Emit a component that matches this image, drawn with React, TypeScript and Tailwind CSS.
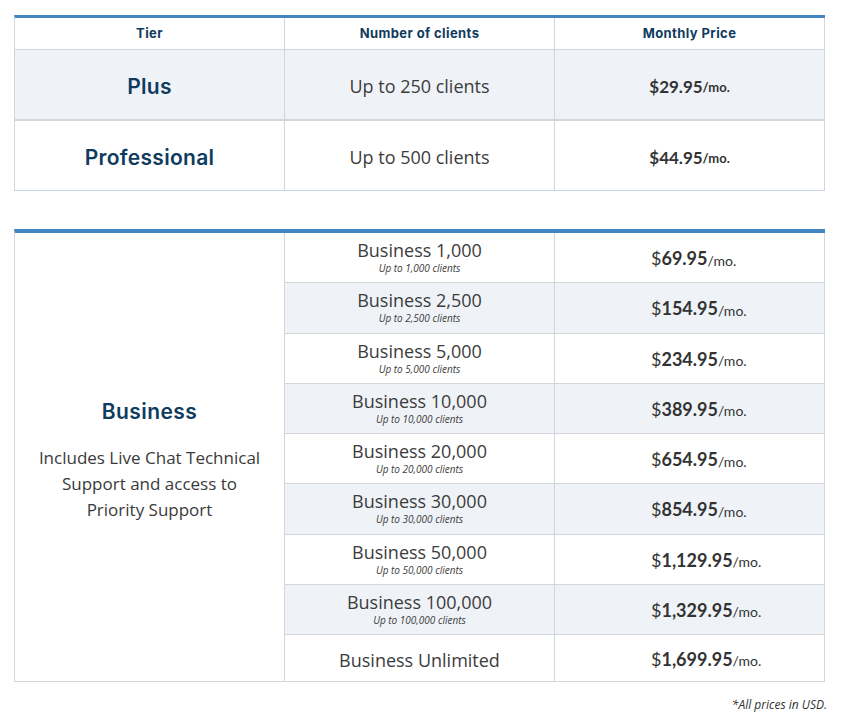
import React from 'react';

const heading = "font-['Inter','Noto_Sans',sans-serif]";
const body = "font-['Open_Sans','Noto_Sans',sans-serif]";
const price = "font-['Lato','Liberation_Sans',sans-serif]";

const topTiers = [
  { name: 'Plus', clients: 'Up to 250 clients', price: '$29.95' },
  { name: 'Professional', clients: 'Up to 500 clients', price: '$44.95' },
];

const businessTiers = [
  { name: 'Business 1,000', sub: 'Up to 1,000 clients', price: '69.95' },
  { name: 'Business 2,500', sub: 'Up to 2,500 clients', price: '154.95' },
  { name: 'Business 5,000', sub: 'Up to 5,000 clients', price: '234.95' },
  { name: 'Business 10,000', sub: 'Up to 10,000 clients', price: '389.95' },
  { name: 'Business 20,000', sub: 'Up to 20,000 clients', price: '654.95' },
  { name: 'Business 30,000', sub: 'Up to 30,000 clients', price: '854.95' },
  { name: 'Business 50,000', sub: 'Up to 50,000 clients', price: '1,129.95' },
  { name: 'Business 100,000', sub: 'Up to 100,000 clients', price: '1,329.95' },
  { name: 'Business Unlimited', sub: '', price: '1,699.95' },
];

export default function App() {
  return (
    <main className="min-h-screen bg-white pt-[15px] pl-[14px]">
      {/* Plus / Professional */}
      <div className="w-[811px] border-t-[3px] border-l border-t-[#4384c3] border-l-[#d2d5d9]">
        <div className="grid grid-cols-[270px_270px_270px]">
          {['Tier', 'Number of clients', 'Monthly Price'].map((h) => (
            <div
              key={h}
              className={`${heading} h-[32px] flex items-center justify-center pt-[1px] border-r border-b border-[#d2d5d9] text-[13px] tracking-[0.4px] font-bold text-[#0f3b5f]`}
            >
              {h}
            </div>
          ))}
          {topTiers.map((t, i) => {
            const bg = i % 2 === 0 ? 'bg-[#eff3f8]' : 'bg-white';
            const h = i === 0 ? 'h-[71px] border-b-2' : 'h-[70px] border-b';
            const border = i === topTiers.length - 1 ? 'border-[#c5d4e6]' : 'border-[#d2d5d9]';
            return (
              <React.Fragment key={t.name}>
                <div className={`${heading} ${bg} ${h} ${border} border-r border-r-[#d2d5d9] flex items-center justify-center pt-[4px] text-[21px] tracking-[0.3px] font-semibold text-[#0f3b5f]`}>
                  {t.name}
                </div>
                <div className={`${body} ${bg} ${h} ${border} border-r border-r-[#d2d5d9] flex items-center justify-center pt-[4px] text-[18px] text-[#3c3c3c]`}>
                  {t.clients}
                </div>
                <div className={`${price} ${bg} ${h} ${border} border-r border-r-[#d2d5d9] flex items-center justify-center pt-[4px] font-bold text-[#333]`}>
                  <span className="text-[17px]">{t.price}</span>
                  <span className="text-[13px] mt-[3px]">/mo.</span>
                </div>
              </React.Fragment>
            );
          })}
        </div>
      </div>

      {/* Business */}
      <div className="mt-[38px] w-[811px] border-t-[4px] border-l border-t-[#4384c3] border-l-[#d2d5d9]">
        <div className="flex">
          <div className="w-[270px] border-r border-b border-[#d2d5d9] flex flex-col items-center justify-center pt-[5px]">
            <div className={`${heading} text-[21px] tracking-[0.4px] font-semibold text-[#0f3b5f]`}>Business</div>
            <p className={`${body} mt-[18px] text-[17px] leading-[26px] text-[#3a3a3a] text-center`}>
              Includes Live Chat Technical
              <br />
              Support and access to
              <br />
              Priority Support
            </p>
          </div>
          <div className="flex flex-col">
            {businessTiers.map((t, i) => {
              const bg = i % 2 === 1 ? 'bg-[#eff3f8]' : 'bg-white';
              const h = i === businessTiers.length - 1 ? 'h-[47px]' : 'h-[50.25px]';
              return (
                <div key={t.name} className={`flex ${bg} ${h}`}>
                  <div
                    className={`${body} w-[270px] border-r border-b border-[#d2d5d9] flex flex-col items-center justify-center text-[#3c3c3c] ${
                      t.sub ? 'pb-[2px]' : 'pt-[4px]'
                    }`}
                  >
                    <span className="text-[18px] leading-[23px]">{t.name}</span>
                    {t.sub && <span className="text-[10px] italic leading-[12px]">{t.sub}</span>}
                  </div>
                  <div className={`${price} w-[270px] border-r border-b border-[#d2d5d9] flex items-center pl-[96px] pt-[2px] text-[#333]`}>
                    <span className="text-[18px]">$</span>
                    <span className="text-[18px] font-bold">{t.price}</span>
                    <span className="text-[14px] mt-[3px]">/mo.</span>
                  </div>
                </div>
              );
            })}
          </div>
        </div>
      </div>

      <p className={`${body} w-[813px] mt-[14px] text-right text-[12px] italic text-[#333]`}>*All prices in USD.</p>
    </main>
  );
}
